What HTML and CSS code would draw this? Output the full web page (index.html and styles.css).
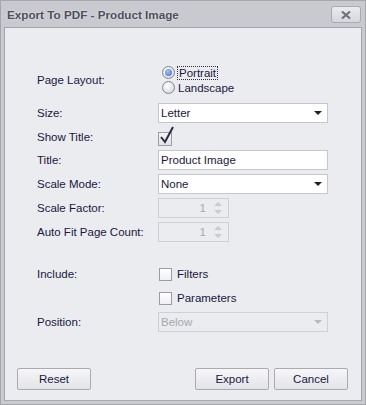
FILE: index.html
```html
<!DOCTYPE html>
<html lang="en">
<head>
  <meta charset="UTF-8" />
  <title>Export To PDF</title>
  <link rel="stylesheet" href="styles.css">
</head>
<body>
  <div class="window">
    <div class="titlebar">
      <span class="title">Export To PDF - Product Image</span>
      <span class="close-btn">
        <svg width="12" height="10" viewBox="0 0 12 10"><path d="M2 1.5 L10 8.5 M10 1.5 L2 8.5" stroke="#707078" stroke-width="2.2"/></svg>
      </span>
    </div>
    <div class="panel">
      <div class="row layout-row">
        <label class="lbl">Page Layout:</label>
        <div class="radios">
          <div class="radio-item"><span class="radio checked"></span><span class="focus">Portrait</span></div>
          <div class="radio-item"><span class="radio"></span><span>Landscape</span></div>
        </div>
      </div>
      <div class="row">
        <label class="lbl">Size:</label>
        <div class="combo"><span>Letter</span><span class="arrow"></span></div>
      </div>
      <div class="row check-row">
        <label class="lbl">Show Title:</label>
        <span class="checkbox">
          <svg width="18" height="20" viewBox="0 0 18 20"><path d="M3 11 L7 16 L15 1" fill="none" stroke="#2a2a40" stroke-width="2"/></svg>
        </span>
      </div>
      <div class="row">
        <label class="lbl">Title:</label>
        <div class="textbox">Product Image</div>
      </div>
      <div class="row">
        <label class="lbl">Scale Mode:</label>
        <div class="combo"><span>None</span><span class="arrow"></span></div>
      </div>
      <div class="row">
        <label class="lbl">Scale Factor:</label>
        <div class="spin"><span class="val">1</span><span class="spin-btns"><i class="up"></i><i class="down"></i></span></div>
      </div>
      <div class="row">
        <label class="lbl">Auto Fit Page Count:</label>
        <div class="spin"><span class="val">1</span><span class="spin-btns"><i class="up"></i><i class="down"></i></span></div>
      </div>
      <div class="row include-row">
        <label class="lbl">Include:</label>
        <div class="opt"><span class="box"></span>Filters</div>
      </div>
      <div class="row param-row">
        <label class="lbl"></label>
        <div class="opt"><span class="box"></span>Parameters</div>
      </div>
      <div class="row">
        <label class="lbl">Position:</label>
        <div class="combo disabled"><span>Below</span><span class="arrow"></span></div>
      </div>
      <div class="buttons">
        <button class="btn">Reset</button>
        <div class="right-btns">
          <button class="btn">Export</button>
          <button class="btn">Cancel</button>
        </div>
      </div>
    </div>
  </div>
</body>
</html>
```

FILE: styles.css
```css
body {
  margin: 0;
  font-family: "Liberation Sans", Arial, sans-serif;
  font-size: 11.5px;
  color: #181840;
}
.window {
  width: 364px;
  height: 403px;
  background-color: #c9cad0;
  border: 1px solid #a6a7ae;
}
.titlebar {
  height: 26px;
  display: flex;
  align-items: center;
  justify-content: space-between;
  padding: 0 4px 0 6px;
}
.title {
  font-weight: bold;
  font-size: 11.7px;
  color: #4e4e5a;
  text-shadow: 0 0 2px #eef0f4;
  margin-top: 1px;
}
.close-btn {
  width: 28px;
  height: 15px;
  border: 1px solid #a9aab2;
  border-radius: 3px;
  background: linear-gradient(#eaebef, #d6d7dc);
  display: flex;
  align-items: center;
  justify-content: center;
  margin-top: 1px;
}
.panel {
  margin: 0 3px;
  height: 372px;
  background-color: #ebecf0;
  border: 1px solid #a3a4ac;
  border-bottom-color: #a8a9b0;
  padding: 0 12px 0 32px;
}
.row {
  display: flex;
  align-items: center;
  height: 20px;
  margin-top: 4px;
}
.lbl {
  width: 121px;
  flex-shrink: 0;
}
.layout-row {
  height: 32px;
  margin-top: 36px;
  align-items: center;
}
.layout-row + .row {
  margin-top: 7px;
}
.radios {
  display: flex;
  flex-direction: column;
  margin-left: 4px;
}
.radio-item {
  display: flex;
  align-items: center;
  height: 15px;
}
.radio {
  width: 11px;
  height: 11px;
  border-radius: 50%;
  border: 1px solid #84858e;
  background: radial-gradient(circle at 40% 35%, #ffffff, #cfd0d6);
  margin-right: 3px;
  position: relative;
}
.radio.checked::after {
  content: "";
  position: absolute;
  left: 2px;
  top: 2px;
  width: 7px;
  height: 7px;
  border-radius: 50%;
  background: radial-gradient(circle at 40% 35%, #a8c4f0, #3f68c4);
}
.focus {
  outline: 1px dotted #303040;
  padding: 0 1px;
}
.combo, .textbox {
  width: 166px;
  height: 18px;
  border: 1px solid #c6c7ce;
  background: #fff;
  display: flex;
  align-items: center;
  justify-content: space-between;
  padding: 0 0 0 2px;
}
.arrow {
  width: 0;
  height: 0;
  border-left: 4px solid transparent;
  border-right: 4px solid transparent;
  border-top: 4px solid #1e1e30;
  margin-right: 5px;
}
.combo.disabled {
  background: transparent;
  border-color: #cfd0d6;
  color: #a6a7ad;
}
.combo.disabled .arrow {
  border-top-color: #b8b9c0;
}
.check-row {
  height: 19px;
}
.checkbox {
  width: 12px;
  height: 12px;
  border: 1px solid #9b9ca4;
  background: linear-gradient(#f3f4f6, #e2e3e8);
  margin-top: 4px;
  position: relative;
}
.checkbox svg {
  position: absolute;
  left: -1px;
  top: -7px;
}
.spin {
  width: 69px;
  height: 18px;
  border: 1px solid #cfd0d6;
  display: flex;
  align-items: center;
  justify-content: flex-end;
  color: #a6a7ad;
}
.spin .val {
  margin-right: 8px;
}
.spin-btns {
  display: flex;
  flex-direction: column;
  gap: 4px;
  margin-right: 6px;
}
.spin-btns i {
  display: block;
  width: 0;
  height: 0;
  border-left: 4px solid transparent;
  border-right: 4px solid transparent;
}
.spin-btns .up {
  border-bottom: 4px solid #c9cad0;
}
.spin-btns .down {
  border-top: 4px solid #c9cad0;
}
.include-row {
  margin-top: 23px;
  height: 18px;
}
.param-row {
  margin-top: 6px;
  height: 18px;
}
.param-row + .row {
  margin-top: 5px;
}
.opt {
  display: flex;
  align-items: center;
  margin-left: 1px;
}
.box {
  width: 11px;
  height: 11px;
  border: 1px solid #9b9ca4;
  background: linear-gradient(#ffffff, #f0f0f3);
  margin-right: 5px;
}
.buttons {
  display: flex;
  justify-content: space-between;
  margin: 36px 0 0 -20px;
  width: 331px;
}
.right-btns {
  display: flex;
  gap: 5px;
}
.btn {
  width: 74px;
  height: 22px;
  font-family: "Liberation Sans", Arial, sans-serif;
  font-size: 11.5px;
  color: #181840;
  border: 1px solid #a9aab2;
  border-radius: 2px;
  background: linear-gradient(#f6f6f8, #e3e4e8);
  padding: 0;
}
```
